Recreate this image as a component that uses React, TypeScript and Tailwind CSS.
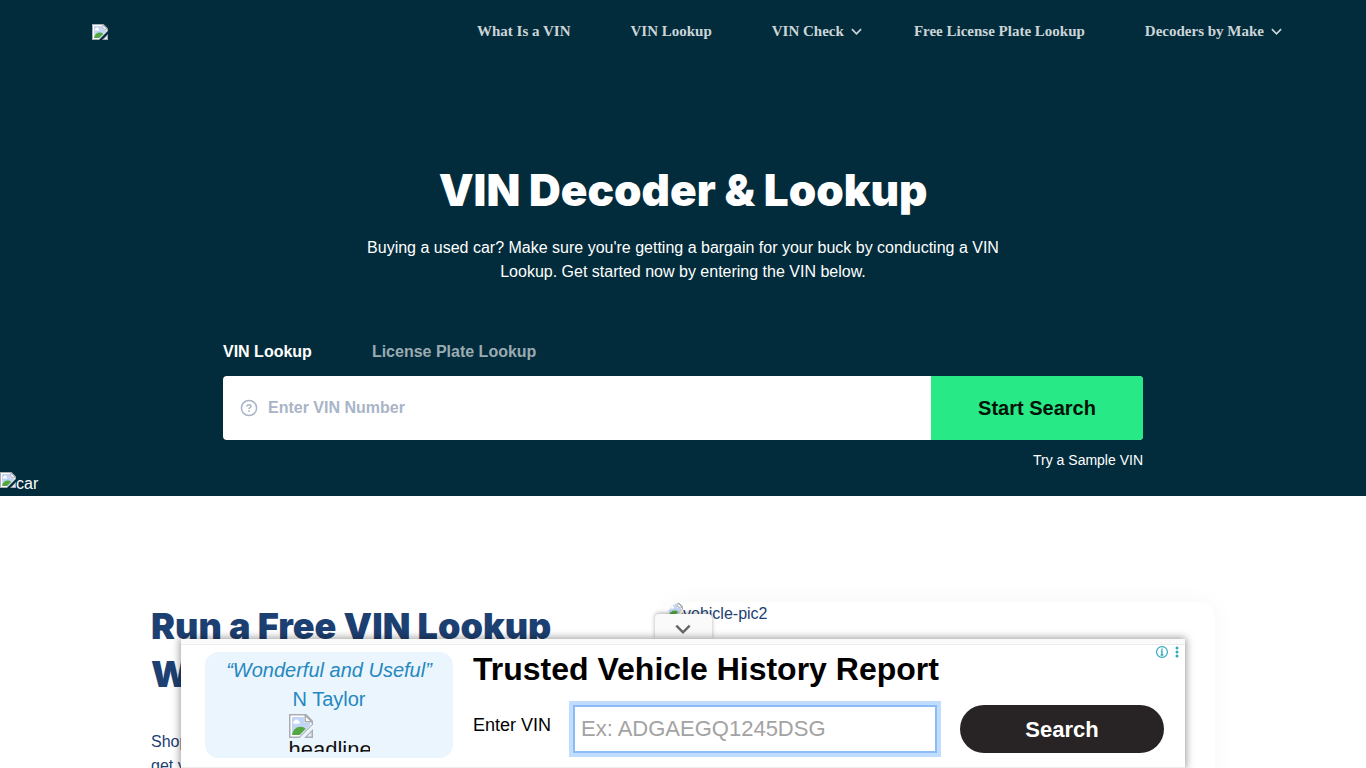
import React from "react";

function BrokenImage({ className = "" }: { className?: string }) {
  return (
    <svg width="16" height="16" viewBox="0 0 16 16" className={`shrink-0 ${className}`} aria-hidden="true">
      <path d="M0 0H11.500L16 4.500V7L7 16H0Z" fill="#a9adb3" />
      <path d="M1 1H11L15 5V7L7 15H1Z" fill="#fff" />
      <path d="M2 2H10V6H14V7.500L7.500 14H2Z" fill="#c2d5f5" />
      <path d="M3.500 6.500c-1 0-1-1.700.1-1.800.3-1.500 2.600-1.500 2.800.1 1.100 0 1.100 1.700 0 1.700Z" fill="#fff" />
      <path d="M2 14C2.600 10.500 4.800 8.500 7.500 8.500c1.600 0 2.800.5 3.600 1.400L7 14Z" fill="#53a93f" />
      <path d="M10.800 .8V5.200H15.200Z" fill="#fff" stroke="#a9adb3" />
      <path d="M16 10V16H10Z" fill="#a9adb3" />
      <path d="M15 12V15H12Z" fill="#e8edf5" />
    </svg>
  );
}

function Chevron({ size }: { size: number }) {
  return (
    <svg width={size} height={size} viewBox="0 0 12 12" fill="none" stroke="currentColor" strokeWidth="1.8" aria-hidden="true">
      <path d="M1 3.500L6 8.500L11 3.500" />
    </svg>
  );
}

const links = [
  { label: "What Is a VIN", menu: false },
  { label: "VIN Lookup", menu: false },
  { label: "VIN Check", menu: true },
  { label: "Free License Plate Lookup", menu: false },
  { label: "Decoders by Make", menu: true },
];

function Header() {
  return (
    <header className="flex items-center justify-between px-[92px] pt-5">
      <a href="#" aria-label="Home" className="pt-[2px]">
        <BrokenImage />
      </a>
      <nav className="flex gap-[60px] font-['Liberation_Serif',serif] text-[15px] leading-[22px] font-bold text-[#ccd5d8]">
        {links.map((l) => (
          <a key={l.label} href="#" className="flex items-center whitespace-nowrap">
            {l.label}
            {l.menu && (
              <span className="-mr-2 ml-[7px]">
                <Chevron size={11} />
              </span>
            )}
          </a>
        ))}
      </nav>
    </header>
  );
}

function Hero() {
  return (
    <section className="bg-[#022c3c] text-white">
      <Header />
      <div className="mx-auto max-w-[920px] pt-[124px]">
        <h1 className="text-center font-['Arial_Black','Inter',sans-serif] text-[44px] leading-12 font-black">VIN Decoder &amp; Lookup</h1>
        <p className="mx-auto mt-[22px] max-w-[640px] text-center text-base">
          Buying a used car? Make sure you're getting a bargain for your buck by conducting a VIN Lookup. Get started now by
          entering the VIN below.
        </p>
        <div className="mt-14 flex gap-[60px] text-base font-bold">
          <button type="button">VIN Lookup</button>
          <button type="button" className="text-[#9aabb1]">License Plate Lookup</button>
        </div>
        <form className="mt-3 flex h-16 overflow-hidden rounded bg-white" onSubmit={(e) => e.preventDefault()}>
          <label htmlFor="vin" className="flex items-center pr-[10px] pl-[17px] text-[#a9b4c8]">
            <svg width="18" height="18" viewBox="0 0 18 18" fill="none" stroke="currentColor" strokeWidth="1.500" role="img" aria-label="VIN number">
              <circle cx="9" cy="9" r="7.600" />
              <path d="M7 7.600c0-2.600 4-2.500 4-.3 0 1.300-2 1.300-2 2.800" />
              <path d="M9 11.300V12.900" />
            </svg>
          </label>
          <input id="vin" placeholder="Enter VIN Number" className="min-w-0 flex-1 text-base font-bold text-[#1d4072] outline-none placeholder:text-[#a9b4c8]" />
          <button type="submit" className="w-[212px] bg-[#27e985] text-xl font-bold text-[#021208]">Start Search</button>
        </form>
        <div className="mt-[10px] text-right text-sm">
          <a href="#">Try a Sample VIN</a>
        </div>
      </div>
      <div className="mt-[2px] flex h-6 overflow-hidden text-base">
        <BrokenImage />
        <span>car</span>
      </div>
    </section>
  );
}

function Intro() {
  return (
    <section className="mx-auto grid max-w-[1064px] grid-cols-[1fr_548px] gap-16 pt-[106px]">
      <div>
        <h2 className="font-['Arial_Black','Inter',sans-serif] text-4xl leading-12 font-black whitespace-nowrap text-[#1d4072]">
          Run a Free VIN Lookup
          <br />
          With
        </h2>
        <p className="mt-8 text-base text-[#1d4072]">
          Shopping
          <br />
          get your
        </p>
      </div>
      <div className="flex h-[400px] overflow-hidden rounded-2xl text-base text-[#1d4072] shadow-[0_0_24px_rgba(0,0,0,0.04)]">
        <BrokenImage />
        <span>vehicle-pic2</span>
      </div>
    </section>
  );
}

function Banner() {
  return (
    <aside className="fixed inset-x-0 bottom-0 flex flex-col items-center">
      <button type="button" aria-label="Collapse" className="flex h-[25px] w-[57px] items-center justify-center rounded-t bg-[#fafafa] pt-1 text-[#666] shadow-[0_-1px_4px_rgba(0,0,0,0.3)]">
        <Chevron size={16} />
      </button>
      <div className="relative w-full max-w-[1004px] bg-[#fafafa] pt-[5px] shadow-[0_0_8px_1px_rgba(0,0,0,0.4)]">
        <div className="flex h-[124px] border-y border-[#ececec] bg-white pt-[7px] pl-6">
          <div className="flex h-[106px] w-[248px] flex-col items-center overflow-hidden rounded-[14px] bg-[#ebf5fd] pt-1 text-xl text-[#2488c0]">
            <p className="leading-[29px] italic">“Wonderful and Useful”</p>
            <p className="leading-[29px]">N Taylor</p>
            <div className="h-[38px] w-[81px] overflow-hidden text-[22px] leading-6 text-[#111]">
              <BrokenImage className="size-6" />
              <span>headline</span>
            </div>
          </div>
          <div className="flex-1 pt-px pl-5">
            <h3 className="text-[32px] leading-8 font-bold text-black">Trusted Vehicle History Report</h3>
            <form className="mt-5 flex items-center" onSubmit={(e) => e.preventDefault()}>
              <label htmlFor="sample" className="w-[100px] pb-2 text-lg text-black">Enter VIN</label>
              <input id="sample" placeholder="Ex: ADGAEGQ1245DSG" className="h-12 w-[364px] border-2 border-[#8bbcf5] bg-white pl-[6px] text-[22px] ring-4 ring-[#c0ddff] outline-none placeholder:text-[#a3a3a3]" />
              <button type="submit" className="ml-[23px] h-12 w-[204px] rounded-full bg-[#282425] text-[22px] font-bold text-white">Search</button>
            </form>
          </div>
        </div>
        <div className="absolute top-[6px] right-1 flex items-center gap-1 text-[#2fa9bd]">
          <svg width="14" height="14" viewBox="0 0 14 14" fill="none" stroke="currentColor" strokeWidth="1.200" aria-hidden="true">
            <circle cx="7" cy="7" r="5.400" />
            <path d="M7 3.500V5M5.800 6.300H7V10M5.600 10H8.400" strokeWidth="1.400" />
          </svg>
          <svg width="8" height="14" viewBox="0 0 8 14" fill="currentColor" aria-hidden="true">
            <circle cx="4" cy="3" r="1.500" />
            <circle cx="4" cy="7" r="1.500" />
            <circle cx="4" cy="11" r="1.500" />
          </svg>
        </div>
      </div>
    </aside>
  );
}

export default function App() {
  return (
    <div className="h-screen overflow-hidden bg-white font-['Liberation_Sans',Arial,sans-serif]">
      <Hero />
      <Intro />
      <Banner />
    </div>
  );
}
